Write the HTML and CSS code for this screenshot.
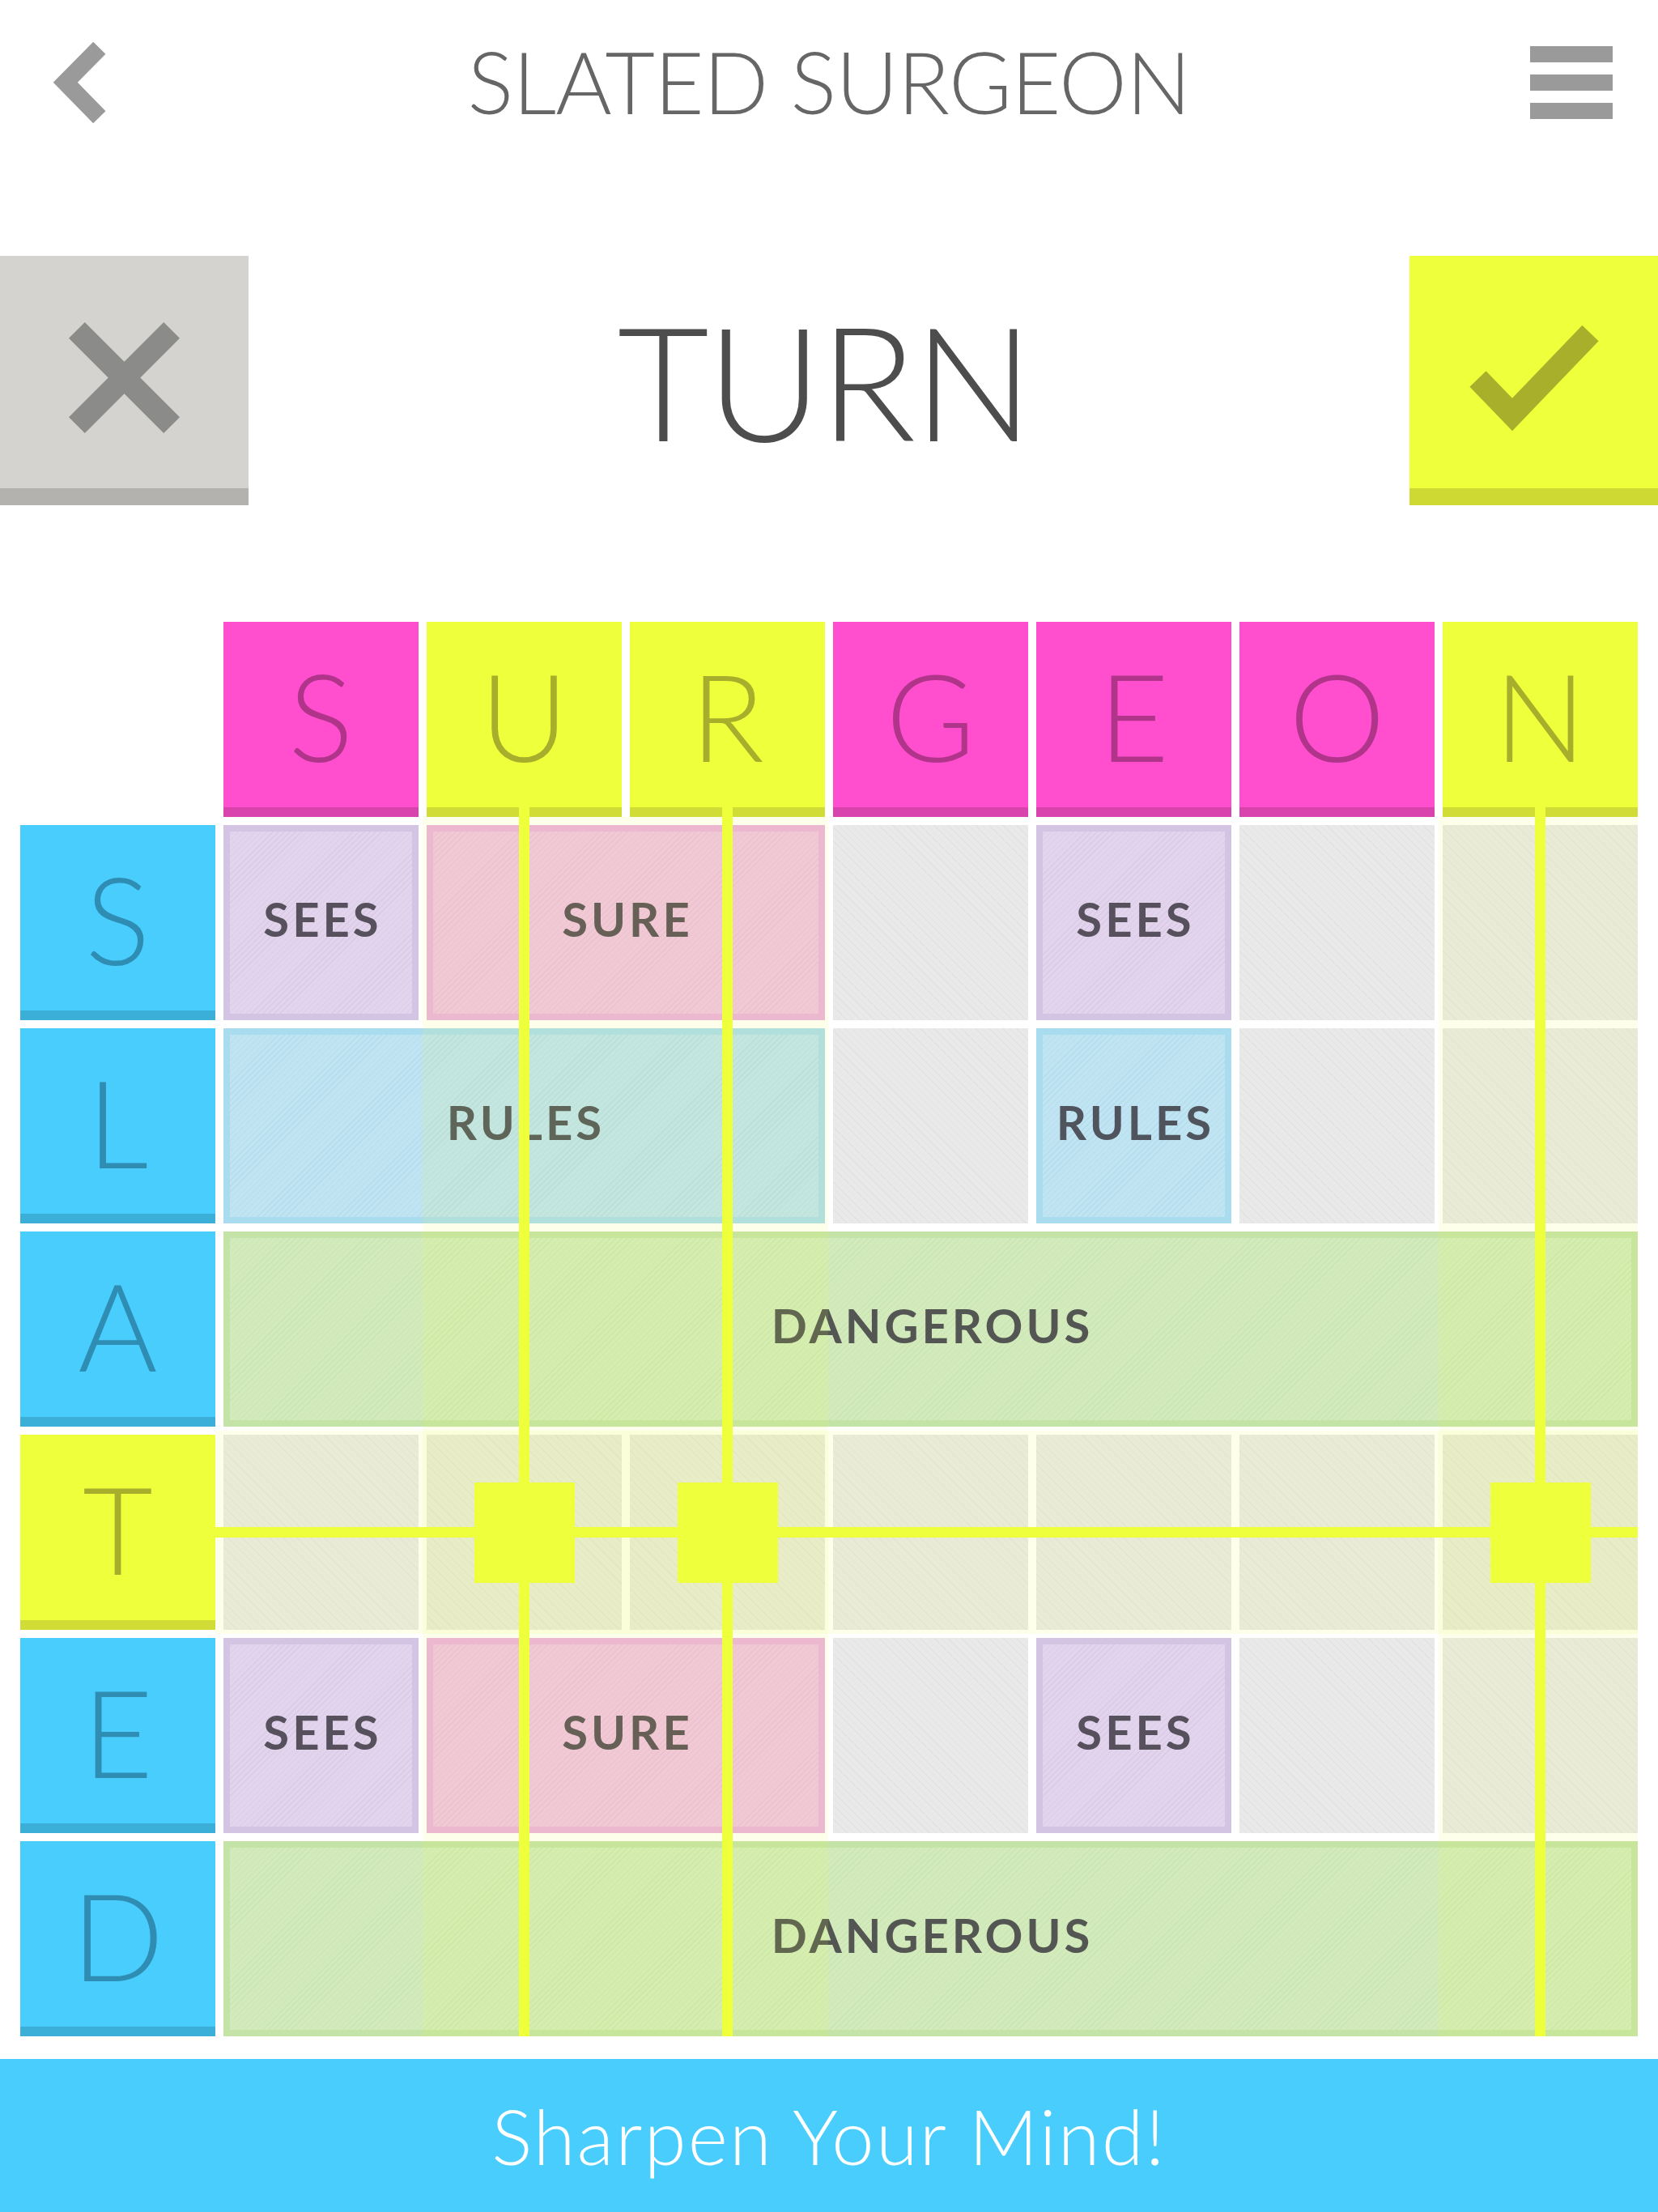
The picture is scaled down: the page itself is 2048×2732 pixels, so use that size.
FILE: index.html
```html
<!DOCTYPE html>
<html lang="en">
<head>
<meta charset="utf-8">
<title>Slated Surgeon</title>
<link rel="stylesheet" href="styles.css">
</head>
<body>
<div class="app">
  <header class="topbar">
    <div class="back" aria-label="Back">
      <svg width="66" height="101" viewBox="0 0 66 101"><polyline points="57.8,7.3 15.8,49.7 57.8,92.7" fill="none" stroke="#9a9a9a" stroke-width="21.5" stroke-linejoin="miter" stroke-linecap="butt"/></svg>
    </div>
    <h1 class="title">SLATED SURGEON</h1>
    <div class="menu" aria-label="Menu"><span></span><span></span><span></span></div>
  </header>

  <section class="turn-row">
    <div class="action action-cancel">
      <svg width="137" height="137" viewBox="0 0 137 137"><path d="M9.9 9.9 L127.1 127.1 M127.1 9.9 L9.9 127.1" fill="none" stroke="#8b8b89" stroke-width="28" stroke-linecap="butt"/></svg>
    </div>
    <div class="turn-word">TURN</div>
    <div class="action action-ok">
      <svg width="160" height="132" viewBox="0 0 160 132"><polyline points="10.5,67 53,111 149.5,10.5" fill="none" stroke="#a8af2b" stroke-width="28" stroke-linejoin="miter" stroke-linecap="butt"/></svg>
    </div>
  </section>

  <section class="board">
    <!-- column headers -->
    <div class="r1 c1"></div>
    <div class="tile head pink r1 c2">S</div>
    <div class="tile head yellow r1 c3">U</div>
    <div class="tile head yellow r1 c4">R</div>
    <div class="tile head pink r1 c5">G</div>
    <div class="tile head pink r1 c6">E</div>
    <div class="tile head pink r1 c7">O</div>
    <div class="tile head yellow r1 c8">N</div>

    <!-- row S -->
    <div class="tile blue r2 c1">S</div>
    <div class="cell purple r2 c2">SEES</div>
    <div class="cell rose r2 c3 span2">SURE</div>
    <div class="cell empty r2 c5"></div>
    <div class="cell purple r2 c6">SEES</div>
    <div class="cell empty r2 c7"></div>
    <div class="cell empty r2 c8"></div>

    <!-- row L -->
    <div class="tile blue r3 c1">L</div>
    <div class="cell sky r3 c2 span3">RULES</div>
    <div class="cell empty r3 c5"></div>
    <div class="cell sky r3 c6">RULES</div>
    <div class="cell empty r3 c7"></div>
    <div class="cell empty r3 c8"></div>

    <!-- row A -->
    <div class="tile blue r4 c1">A</div>
    <div class="cell green r4 c2 span7">DANGEROUS</div>

    <!-- row T -->
    <div class="tile yellow r5 c1">T</div>
    <div class="cell empty r5 c2"></div>
    <div class="cell empty r5 c3"></div>
    <div class="cell empty r5 c4"></div>
    <div class="cell empty r5 c5"></div>
    <div class="cell empty r5 c6"></div>
    <div class="cell empty r5 c7"></div>
    <div class="cell empty r5 c8"></div>

    <!-- row E -->
    <div class="tile blue r6 c1">E</div>
    <div class="cell purple r6 c2">SEES</div>
    <div class="cell rose r6 c3 span2">SURE</div>
    <div class="cell empty r6 c5"></div>
    <div class="cell purple r6 c6">SEES</div>
    <div class="cell empty r6 c7"></div>
    <div class="cell empty r6 c8"></div>

    <!-- row D -->
    <div class="tile blue r7 c1">D</div>
    <div class="cell green r7 c2 span7">DANGEROUS</div>

    <!-- highlight overlays -->
    <div class="glow glow-col-ur"></div>
    <div class="glow glow-col-n"></div>
    <div class="glow glow-row-t"></div>

    <!-- selection lines -->
    <div class="vline c3"></div>
    <div class="vline c4"></div>
    <div class="vline c8"></div>
    <div class="hline"></div>
    <div class="node c3"></div>
    <div class="node c4"></div>
    <div class="node c8"></div>
  </section>

  <footer class="footer">Sharpen Your Mind!</footer>
</div>
</body>
</html>
```

FILE: styles.css
```css
* {
  box-sizing: border-box;
  margin: 0;
  padding: 0;
}

html, body {
  background: #ffffff;
}

body {
  width: 2048px;
  font-family: "Lato", "Liberation Sans", sans-serif;
}

.app {
  width: 2048px;
  height: 2732px;
  display: flex;
  flex-direction: column;
  overflow: hidden;
}

/* ---------- top bar ---------- */
.topbar {
  height: 204px;
  display: grid;
  grid-template-columns: 1fr auto 1fr;
  align-items: center;
}

.back {
  justify-self: start;
  margin-left: 65px;
  width: 66px;
  height: 101px;
}

.back svg,
.action svg {
  display: block;
}

.title {
  font-weight: 300;
  font-size: 106px;
  line-height: 1;
  color: #666666;
  letter-spacing: -0.8px;
  margin-top: -4px;
  white-space: nowrap;
}

.menu {
  justify-self: end;
  margin-right: 56px;
  width: 102px;
  display: flex;
  flex-direction: column;
  gap: 15px;
}

.menu span {
  display: block;
  height: 20px;
  background: #9a9a9a;
}

/* ---------- turn row ---------- */
.turn-row {
  margin-top: 112px;
  height: 308px;
  display: flex;
  justify-content: space-between;
}

.action {
  width: 307px;
  height: 308px;
  border-bottom: 21px solid;
  padding-top: 14px;
  display: flex;
  align-items: center;
  justify-content: center;
}

.action-cancel {
  background: #d4d3cf;
  border-color: #b3b2ae;
}

.action-ok {
  background: #eeff3c;
  border-color: #cfd934;
}

.turn-word {
  flex: 1;
  display: flex;
  align-items: center;
  justify-content: center;
  padding-right: 12px;
  font-size: 196px;
  font-weight: 300;
  line-height: 1;
  color: #4d4d4d;
  letter-spacing: -3px;
}

/* ---------- board ---------- */
.board {
  margin: 144px 0 0 25px;
  display: grid;
  grid-template-columns: repeat(8, 241px);
  grid-template-rows: repeat(7, 241px);
  gap: 10px;
}

.r1 { grid-row-start: 1; }
.r2 { grid-row-start: 2; }
.r3 { grid-row-start: 3; }
.r4 { grid-row-start: 4; }
.r5 { grid-row-start: 5; }
.r6 { grid-row-start: 6; }
.r7 { grid-row-start: 7; }

.c1 { grid-column-start: 1; }
.c2 { grid-column-start: 2; }
.c3 { grid-column-start: 3; }
.c4 { grid-column-start: 4; }
.c5 { grid-column-start: 5; }
.c6 { grid-column-start: 6; }
.c7 { grid-column-start: 7; }
.c8 { grid-column-start: 8; }

.span2 { grid-column-end: span 2; }
.span3 { grid-column-end: span 3; }
.span7 { grid-column-end: span 7; }

/* letter tiles */
.tile {
  display: flex;
  align-items: center;
  justify-content: center;
  border-bottom: 12px solid;
  font-size: 150px;
  font-weight: 300;
  line-height: 1;
}

.tile.pink {
  background: #ff4fcf;
  border-color: #d943ad;
  color: #b0358a;
}

.tile.yellow {
  background: #eeff3c;
  border-color: #d2dc36;
  color: #a6ae2b;
}

.tile.blue {
  background: #48cdfd;
  border-color: #3cafd9;
  color: #2f8db3;
}

/* word cells */
.cell {
  display: flex;
  align-items: center;
  justify-content: center;
  padding-bottom: 10px;
  padding-left: 4px;
  border: 8px solid transparent;
  background-clip: padding-box;
  font-size: 58px;
  font-weight: 700;
  letter-spacing: 4px;
  color: rgba(55, 52, 60, 0.82);
  white-space: nowrap;
}

.cell.purple {
  border-color: #d4c4e3;
  background-color: #e2d4ec;
  background-image: repeating-linear-gradient(-45deg, rgba(170, 140, 195, 0.14) 0 1px, transparent 1px 5px);
}

.cell.rose {
  border-color: #ecb0e0;
  background-color: #f2c3e7;
  background-image: repeating-linear-gradient(-45deg, rgba(200, 120, 170, 0.12) 0 1px, transparent 1px 5px);
}

.cell.sky {
  border-color: #aadcef;
  background-color: #c0e4f2;
  background-image: repeating-linear-gradient(-45deg, rgba(100, 170, 200, 0.14) 0 1px, transparent 1px 5px);
}

.cell.green {
  border-color: #c3e4a6;
  background-color: #d3ebbc;
  background-image: repeating-linear-gradient(-45deg, rgba(140, 190, 110, 0.13) 0 1px, transparent 1px 5px);
}

.cell.empty {
  border: 0;
  background-color: #e9e9e9;
  background-image: repeating-linear-gradient(45deg, rgba(0, 0, 0, 0.03) 0 1px, transparent 1px 6px);
}

/* highlight overlays */
.glow {
  background: rgba(238, 255, 60, 0.1);
}

.glow-col-ur {
  grid-row: 2 / 8;
  grid-column: 3 / 5;
  margin: -10px -4px 0 -5px;
}

.glow-col-n {
  grid-row: 2 / 8;
  grid-column: 8 / 9;
  margin: -10px 0 0 -5px;
}

.glow-row-t {
  grid-row: 5 / 6;
  grid-column: 2 / 9;
  margin: -5px 0 -5px -10px;
}

/* selection lines */
.vline {
  grid-row: 1 / 8;
  justify-self: center;
  width: 13px;
  margin-top: 229px;
  background: #eeff3c;
}

.hline {
  grid-row: 5 / 6;
  grid-column: 2 / 9;
  align-self: center;
  height: 13px;
  margin-left: -10px;
  background: #eeff3c;
}

.node {
  grid-row: 5 / 6;
  place-self: center;
  width: 124px;
  height: 124px;
  background: #eeff3c;
}

/* ---------- footer ---------- */
.footer {
  margin-top: 28px;
  height: 189px;
  background: #48cdfd;
  display: flex;
  align-items: center;
  justify-content: center;
  color: #ffffff;
  font-size: 94px;
  font-weight: 300;
  letter-spacing: 2.2px;
  line-height: 1;
}
```
